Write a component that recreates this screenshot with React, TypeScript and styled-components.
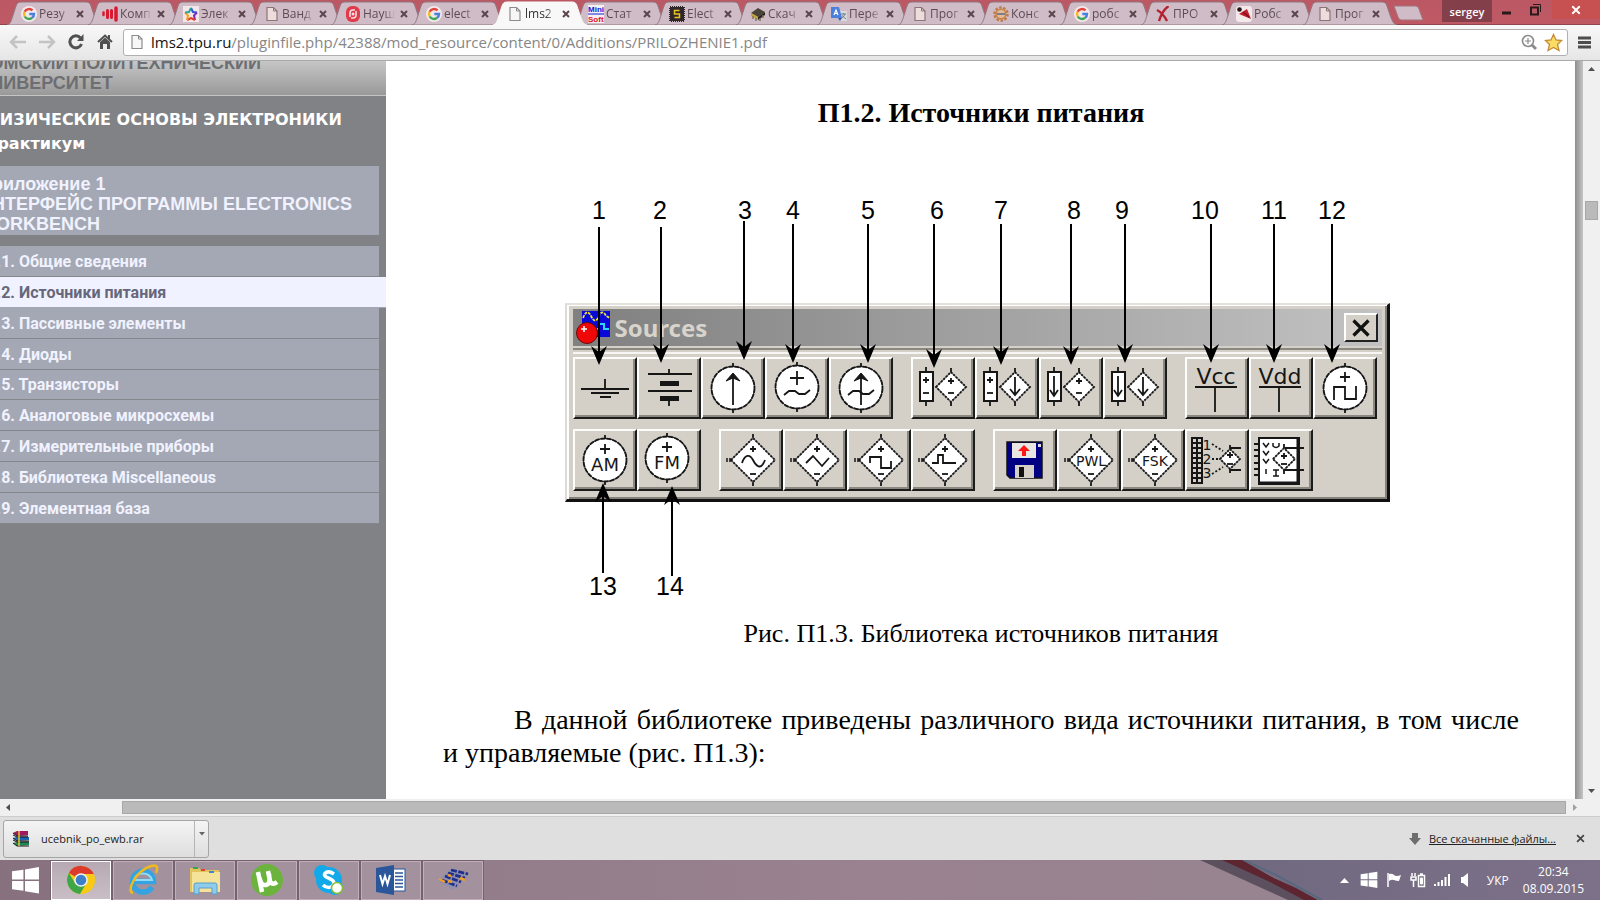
import React from 'react';
import styled, { createGlobalStyle } from 'styled-components';

const ui = '"Open Sans", "Noto Sans", sans-serif';
const arial = '"Liberation Sans", Arial, sans-serif';
const times = '"Liberation Serif", "Times New Roman", serif';

const GlobalStyle = createGlobalStyle`
  * { box-sizing: border-box; }
  body { margin: 0; font-family: ${ui}; overflow: hidden; }
  button { font: inherit; padding: 0; border: 0; background: none; color: inherit; }
  h1, h2, h3, p, ul, figure { margin: 0; padding: 0; }
  svg { display: block; flex: none; }
`;

const Browser = styled.div`
  display: flex;
  flex-direction: column;
  height: 100vh;
  overflow: hidden;
`;

/* ---------- tab strip ---------- */

const TabStrip = styled.header`
  display: flex;
  height: 25px;
  flex: none;
  padding-left: 7px;
  background: linear-gradient(#bb5863, #bf5a65);
  box-shadow: inset 0 -1px #8d4750;
`;

const Tabs = styled.nav`
  display: flex;
  flex: 1;
  min-width: 0;
`;

const TabItem = styled.div<{ $active?: boolean }>`
  position: relative;
  z-index: ${(p) => (p.$active ? 2 : 1)};
  flex: 1;
  min-width: 0;
  height: 25px;
  display: flex;
  align-items: center;
  padding: 2px 0 0 14px;
  color: ${(p) => (p.$active ? '#333' : '#5d4c53')};
`;

const TabShape = styled.svg`
  position: absolute;
  z-index: -1;
  top: 1px;
  left: 0;
  width: calc(100% + 13px);
  height: 24px;
`;

const TabTitle = styled.a`
  flex: 1;
  min-width: 0;
  margin-left: 2px;
  white-space: nowrap;
  font-size: 12px;
  line-height: 18px;
  color: inherit;
  text-decoration: none;
  mask-image: linear-gradient(90deg, #000 65%, transparent);
`;

const TabClose = styled.button`
  width: 8px;
  height: 8px;
  margin: 0 4px 0 5px;
`;

const NewTab = styled.button`
  margin: 5px 18px 0 9px;
  width: 31px;
  height: 16px;
`;

const UserBadge = styled.button`
  width: 50px;
  height: 22px;
  background: #84404a;
  color: #fff;
  font-size: 11px;
  font-weight: 600;
`;

const WindowButtons = styled.div`
  display: flex;
  width: 108px;
  height: 19px;
  justify-content: space-between;
  align-items: center;
`;

const WindowButton = styled.button<{ $close?: boolean }>`
  display: grid;
  place-items: center;
  height: 19px;
  width: ${(p) => (p.$close ? 48 : 28)}px;
  background: ${(p) => (p.$close ? '#c75050' : 'none')};
`;

/* ---------- address bar ---------- */

const Toolbar = styled.div`
  display: flex;
  align-items: center;
  flex: none;
  height: 36px;
  padding: 0 1px 1px 3px;
  background: linear-gradient(#f8f8f8, #e6e6e6);
  border-bottom: 1px solid #a9a9a9;
`;

const NavButton = styled.button`
  display: grid;
  place-items: center;
  width: 29px;
  height: 26px;
  flex: none;
`;

const Omnibox = styled.form`
  display: flex;
  align-items: center;
  flex: 1;
  height: 27px;
  margin: 0 2px 0 4px;
  padding: 0 4px 0 5px;
  gap: 6px;
  background: #fff;
  border: 1px solid #b0b0b0;
  border-radius: 3px;
`;

const AddressField = styled.label`
  position: relative;
  flex: 1;
  display: flex;
  align-items: center;
  height: 25px;
  font-size: 15px;
  line-height: 24px;
  color: #868686;
  white-space: nowrap;
  b { font-weight: 400; color: #111; }
`;

const AddressInput = styled.input`
  position: absolute;
  inset: 0;
  width: 100%;
  border: 0;
  padding: 0;
  background: transparent;
  outline: none;
`;

/* ---------- viewport ---------- */

const Viewport = styled.div`
  display: grid;
  grid-template-columns: 386px minmax(0, 1fr) 8px 17px;
  flex: 1;
  min-height: 0;
`;

const Sidebar = styled.aside`
  overflow: hidden;
  background: #808285;
  font-family: ${arial};
  font-weight: 700;
`;

const University = styled.div`
  height: 35px;
  padding-bottom: 2px;
  display: flex;
  align-items: flex-end;
  overflow: hidden;
  background: linear-gradient(#c6c6c6, #999);
  border-bottom: 1px solid #c4c4c4;
  color: #6d6e71;
  font-size: 18px;
  line-height: 20px;
`;

const Shifted = styled.div`
  margin-left: -21px;
  white-space: nowrap;
`;

const Course = styled.h1`
  margin: 12px 0 0 -16px;
  color: #fff;
  font-family: "DejaVu Sans", ${arial};
  font-size: 16px;
  line-height: 24px;
  font-weight: 700;
  white-space: nowrap;
`;

const Chapter = styled.h2`
  width: 379px;
  height: 69px;
  margin: 10px 0 11px;
  padding-top: 8px;
  background: #a4a8b4;
  color: #f0f2ff;
  font-size: 18px;
  line-height: 20px;
`;

const Sections = styled.ul`
  display: grid;
  grid-auto-rows: 1fr;
  height: 278px;
  list-style: none;
`;

const Section = styled.li<{ $current?: boolean }>`
  display: flex;
  align-items: center;
  width: ${(p) => (p.$current ? '100%' : '379px')};
  padding-top: 2px;
  background: ${(p) => (p.$current ? '#f0f2ff' : '#a4a8b4')};
  border-bottom: 1px solid ${(p) => (p.$current ? '#a4a8b4' : '#85878c')};
`;

const SectionLink = styled.a<{ $current?: boolean }>`
  margin-left: -24px;
  color: ${(p) => (p.$current ? '#66677a' : '#f0f2ff')};
  font-family: Roboto, ${arial};
  font-size: 16px;
  line-height: 20px;
  text-decoration: none;
  white-space: nowrap;
`;

const Document = styled.main`
  overflow: hidden;
  background: #fff;
  padding: 34px 56px 0 57px;
  color: #000;
  font-family: ${times};
  font-size: 28px;
  line-height: 33px;
`;

const Heading = styled.h2`
  font-size: 28px;
  line-height: 36px;
  text-align: center;
`;

const Figure = styled.figure`
  position: relative;
  width: 833px;
  height: 410px;
  margin: 61px auto 0;
  padding-top: 111px;
`;

const Callouts = styled.svg`
  position: absolute;
  inset: 0;
  pointer-events: none;
`;

const Caption = styled.p`
  margin: 15px 0 53px;
  font-size: 26px;
  text-align: center;
`;

const Paragraph = styled.p`
  text-indent: 71px;
  text-align: justify;
`;

const PageEdge = styled.div`
  background: linear-gradient(90deg, #8e8e8e, #c4c4c4);
`;

const VScroll = styled.div`
  display: flex;
  flex-direction: column;
  align-items: center;
  background: #f0f0f0;
`;

const HScroll = styled.div`
  display: flex;
  flex: none;
  align-items: center;
  height: 17px;
  background: #f0f0f0;
`;

const Thumb = styled.div<{ $vertical?: boolean }>`
  ${(p) => (p.$vertical
    ? 'width: 13px; height: 19px; margin: 123px 0 auto;'
    : 'height: 13px; flex: 1; margin: 0 0 0 105px;')}
  background: #bababa;
  border: 1px solid #a8a8a8;
`;

const ScrollArrow = styled.button`
  display: grid;
  place-items: center;
  width: 17px;
  height: 17px;
  flex: none;
`;

const Corner = styled.div`
  width: 17px;
`;

/* ---------- figure: component palette ---------- */

const Palette = styled.div`
  width: 825px;
  height: 199px;
  padding: 4px 5px 0 6px;
  background: #d4d0c8;
  border-style: solid;
  border-width: 2px 3px 3px 2px;
  border-color: #e4e1dc #111 #111 #dedbd6;
  box-shadow: inset 2px 1px #fff, inset -2px -2px #85827c;
`;

const PaletteTitle = styled.div`
  display: flex;
  align-items: center;
  height: 37px;
  padding: 0 4px 0 3px;
  background: linear-gradient(90deg, #808080, #c2c2c2);
  color: #d8d4cc;
  font: 700 24px/30px "Noto Sans", sans-serif;
`;

const PaletteName = styled.span`
  flex: 1;
  margin-left: 4px;
`;

const PaletteClose = styled.button`
  display: grid;
  place-items: center;
  width: 34px;
  height: 29px;
  background: #d4d0c8;
  border: 2px solid;
  border-color: #fff #222 #222 #fff;
`;

const PaletteRule = styled.div`
  height: 6px;
  margin: 2px 0 3px;
  border-top: 2px solid #8b8882;
  border-bottom: 2px solid #f6f5f3;
`;

const PaletteRow = styled.div`
  display: flex;
  gap: 18px;
  margin-bottom: 10px;
`;

const PaletteGroup = styled.div`
  display: flex;
`;

const Tool = styled.button`
  width: 64px;
  height: 62px;
  border-style: solid;
  border-width: 2px;
  border-color: #fdfdfc #1c1c1c #1c1c1c #fdfdfc;
  background: #d4d0c8;
  box-shadow: inset -2px -2px #8b8882;
  svg { margin: -2px; }
`;

/* ---------- downloads and taskbar ---------- */

const Shelf = styled.section`
  display: flex;
  flex: none;
  align-items: center;
  height: 44px;
  padding: 0 15px 0 3px;
  background: #dfdfdf;
  border-top: 1px solid #cdcdcd;
  font-size: 11px;
  color: #222;
`;

const DownloadItem = styled.div`
  display: flex;
  width: 206px;
  height: 38px;
  margin-right: auto;
  border: 1px solid #a5a5a5;
  border-radius: 3px;
  background: linear-gradient(#f4f4f4, #dedede);
`;

const DownloadFile = styled.button`
  display: flex;
  flex: 1;
  align-items: center;
  gap: 11px;
  padding-left: 8px;
`;

const DownloadMenu = styled.button`
  width: 14px;
  display: flex;
  justify-content: center;
  padding-top: 11px;
  border-left: 1px solid #b5b5b5;
`;

const AllDownloads = styled.a`
  margin: 0 20px 0 8px;
  color: #222;
`;

const Taskbar = styled.footer`
  position: relative;
  z-index: 0;
  display: flex;
  flex: none;
  align-items: center;
  height: 40px;
  background: linear-gradient(90deg, #87717f, #937d8b 30%, #9a8290 55%, #988391 75%);
  color: #fff;
  font-size: 12px;
`;

const Wallpaper = styled.svg`
  position: absolute;
  z-index: -1;
  right: 0;
  top: 0;
`;

const StartButton = styled.button`
  display: grid;
  place-items: center;
  width: 50px;
  height: 40px;
`;

const TaskButton = styled.button<{ $active?: boolean }>`
  display: grid;
  place-items: center;
  width: 60px;
  height: 39px;
  margin: 0 1px;
  border: 1px solid ${(p) => (p.$active ? '#fff' : '#c0adb9')};
  outline: 1px solid #75616f;
  outline-offset: 0;
  background: ${(p) => (p.$active ? 'linear-gradient(#b6a9b3, #c9bec6)' : '#a3929e')};
`;

const Tray = styled.div`
  display: flex;
  align-items: center;
  margin-left: auto;
  padding-right: 16px;
  gap: 8px;
`;

const TrayMore = styled.button`
  margin-right: 3px;
`;

const Language = styled.button`
  margin: 0 6px 0 5px;
`;

const Clock = styled.time`
  text-align: center;
  line-height: 17px;
`;

/* ---------- small drawings ---------- */

const Cross = ({ size = 8, color = '#5a464c', w = 2 }: { size?: number; color?: string; w?: number }) => (
  <svg width={size} height={size} viewBox="0 0 8 8">
    <path d="M1 1L7 7M7 1L1 7" stroke={color} strokeWidth={w} />
  </svg>
);

const Tri = ({ dir, color = '#505050' }: { dir: 'up' | 'down' | 'left' | 'right'; color?: string }) => {
  const d = { up: 'M1 6L4.500 2 8 6Z', down: 'M1 3L4.500 7 8 3Z', left: 'M6 1L2 4.500 6 8Z', right: 'M3 1L7 4.500 3 8Z' }[dir];
  return <svg width="9" height="9"><path d={d} fill={color} /></svg>;
};

const PageIcon = ({ fill = '#f7f7f7', stroke = '#8c8c8c' }: { fill?: string; stroke?: string }) => (
  <svg width="16" height="16" viewBox="0 0 16 16">
    <path d="M3 1.500H9.500L13 5V14.500H3Z" fill={fill} stroke={stroke} strokeWidth="1.200" />
    <path d="M9.500 1.500V5H13" fill="none" stroke={stroke} />
  </svg>
);

const GoogleG = () => (
  <svg width="16" height="16" viewBox="0 0 16 16">
    <circle cx="8" cy="8" r="8" fill="#f3e9ec" />
    <g fill="none" strokeWidth="2.400">
      <path d="M11.500 4.400A5 5 0 0 0 3.600 5.700" stroke="#e2443a" />
      <path d="M3.600 5.700A5 5 0 0 0 3.700 10.500" stroke="#f2b921" />
      <path d="M3.700 10.500A5 5 0 0 0 11.300 11.700" stroke="#3da556" />
      <path d="M11.300 11.700A5 5 0 0 0 13 8H8.300" stroke="#4a7fe0" />
    </g>
  </svg>
);

const favicons: Record<string, React.ReactNode> = {
  google: <GoogleG />,
  page: <PageIcon fill="#ecdcdc" stroke="#8d7378" />,
  whitePage: <PageIcon />,
  bars: (
    <svg width="16" height="16" stroke="#d8192f" strokeLinecap="round">
      <path d="M1.500 6.500V9" strokeWidth="2.500" /><path d="M5.500 4.500V11.500M9.500 4.500V11.500" strokeWidth="3" /><path d="M14 2V14" strokeWidth="3.500" />
    </svg>
  ),
  star: (
    <svg width="16" height="16">
      <rect width="16" height="16" fill="#f3e6e8" />
      <path d="M8 2L10 6 14 6.500" fill="none" stroke="#2f55d4" strokeWidth="2" />
      <path d="M14 6.500L11 9.500 12 14" fill="none" stroke="#7b2bb8" strokeWidth="2" />
      <path d="M12 14L8 12 4 14" fill="none" stroke="#e03b2a" strokeWidth="2" />
      <path d="M4 14L5 9.500 2 6.500" fill="none" stroke="#f0a51e" strokeWidth="2" />
      <path d="M2 6.500L6 6 8 2" fill="none" stroke="#29a3a3" strokeWidth="2" />
    </svg>
  ),
  red: (
    <svg width="16" height="16">
      <rect x="1" y="0" width="14" height="16" rx="6" fill="#e23a49" />
      <path d="M5 11V7A3 3 0 0 1 8 4H10M11 5V9A3 3 0 0 1 8 12H6" fill="none" stroke="#f3dfe3" strokeWidth="1.600" />
      <circle cx="8" cy="8" r="1.500" fill="#f3dfe3" />
    </svg>
  ),
  minisoft: (
    <svg width="16" height="18" fontFamily="Liberation Sans" fontWeight="700" fontSize="8">
      <rect width="16" height="18" fill="#f6f0f2" />
      <text x="0" y="7" fill="#1220d8">Mini</text>
      <path d="M0 9H16" stroke="#1220d8" />
      <text x="0" y="17" fill="#e01722">Soft</text>
    </svg>
  ),
  chipS: (
    <svg width="16" height="16">
      <rect x="1" y="1" width="14" height="14" fill="#30262a" stroke="#30262a" strokeWidth="2" strokeDasharray="1 1" />
      <path d="M10.500 4.500H5.500V8H10.500V11.500H5.500" fill="none" stroke="#e6c51f" strokeWidth="1.500" />
    </svg>
  ),
  chip: (
    <svg width="16" height="16">
      <path d="M1 7L8 2 15 6 8 11Z" fill="#4a4438" /><path d="M1 7L8 11V14L1 10Z" fill="#c5a43c" />
      <path d="M8 11L15 6V9L8 14Z" fill="#29231d" />
      <path d="M3 10V13M6 12V15M10 12V15M13 9V12" stroke="#80755f" strokeWidth="1.500" />
    </svg>
  ),
  translate: (
    <svg width="16" height="16">
      <path d="M7 5H16V15H9Z" fill="#d9d9de" /><path d="M0 1H8L11 12H0Z" fill="#4a80db" />
      <path d="M7 12H11L9 15Z" fill="#315fb5" />
      <path d="M3 9L5 4 7 9M3.500 7.500H6.500" fill="none" stroke="#fff" strokeWidth="1.200" />
      <path d="M10 8H15M12.500 7V8M14 8Q13 11 10 12.500M11 9.500L15 13" fill="none" stroke="#777b88" />
    </svg>
  ),
  gear: (
    <svg width="16" height="16">
      <circle cx="8" cy="8" r="6.500" fill="none" stroke="#bd7b45" strokeWidth="2.500" strokeDasharray="2.500 1.500" />
      <circle cx="8" cy="8" r="4.800" fill="#e2bb98" stroke="#c98349" strokeWidth="1.500" />
      <path d="M4 8H12" stroke="#7c7c8d" strokeWidth="2" />
    </svg>
  ),
  redX: (
    <svg width="16" height="16">
      <path d="M13.500 0Q7 5 4 15M2 4Q8 7 12 15" fill="none" stroke="#b3222e" strokeWidth="2.400" />
    </svg>
  ),
  robot: (
    <svg width="16" height="16">
      <rect width="16" height="16" rx="3" fill="#f3e9ea" />
      <path d="M3 8L11 3 15 13Z" fill="#c41e2c" /><path d="M7 6L13 11" stroke="#7c1119" strokeWidth="1.500" />
      <circle cx="3.500" cy="3.500" r="2.300" fill="#241517" />
    </svg>
  ),
};

const tabs: [string, string][] = [
  ['google', 'Резу'], ['bars', 'Комп'], ['star', 'Элек'], ['page', 'Ванд'], ['red', 'Науш'],
  ['google', 'elect'], ['whitePage', 'lms2'], ['minisoft', 'Стат'], ['chipS', 'Elect'], ['chip', 'Скач'],
  ['translate', 'Пере'], ['page', 'Прог'], ['gear', 'Конс'], ['google', 'робс'], ['redX', 'ПРО'],
  ['robot', 'Робс'], ['page', 'Прог'],
];

const Tab = ({ icon, title, active }: { icon: string; title: string; active?: boolean }) => (
  <TabItem $active={active}>
    <TabShape viewBox="0 0 94 24" preserveAspectRatio="none">
      <path
        d="M0 24C4 23 4 20 9 5C10 2 11 1 14 1H79C82 1 83 2 84 5C89 20 90 23 94 24Z"
        fill={active ? '#f8f8f8' : '#cfbcc6'}
        stroke={active ? '#f8f8f8' : '#8f767f'}
      />
    </TabShape>
    {favicons[icon]}
    <TabTitle href="#">{title}</TabTitle>
    <TabClose aria-label="Закрыть вкладку"><Cross /></TabClose>
  </TabItem>
);

/* ---------- schematic symbols, each on a 64 x 62 button ---------- */

const ink = '#161616';
const Sign = ({ x, y, s = 3, minus }: { x: number; y: number; s?: number; minus?: boolean }) => (
  <path d={`M${x - s} ${y}H${x + s}${minus ? '' : `M${x} ${y - s}V${y + s}`}`} />
);
const Round = ({ x = 32, y = 31 }: { x?: number; y?: number }) => (
  <>
    <path d={`M${x} ${y - 25}V${y + 25}`} />
    <circle cx={x} cy={y} r="21.500" fill="#fff" strokeDasharray="5 1" />
    <circle cx={x} cy={y} r="21.500" strokeWidth="1" />
  </>
);
const Diamond = ({ x = 34, y = 31, r = 22 }: { x?: number; y?: number; r?: number }) => (
  <>
    <path d={`M${x} ${y - r - 4}V${y + r + 4}`} />
    <path d={`M${x - r} ${y}L${x} ${y - r}L${x + r} ${y}L${x} ${y + r}Z`} fill="#fff" stroke="#666" strokeWidth="1.200" />
    <path d={`M${x - r} ${y}L${x} ${y - r}L${x + r} ${y}L${x} ${y + r}Z`} strokeDasharray="2 1.500" />
  </>
);
const Controlled = ({ children }: { children: React.ReactNode }) => (
  <>
    <Diamond />
    <path d="M8 29V33M11 29V33" strokeWidth="1.500" />
    <Sign x={34} y={20} />
    <Sign x={34} y={45} minus />
    {children}
  </>
);
const Pair = ({ current, out }: { current?: boolean; out?: boolean }) => (
  <>
    <path d="M15 10V49" />
    <rect x="9" y="15" width="13" height="29" fill="#fff" strokeWidth="2" />
    <Diamond x={40} y={30} r={15} />
    {current ? <path d="M15 19V39M11 33L15 39 19 33" /> : <><Sign x={15} y={23} /><Sign x={15} y={36} minus /></>}
    {out ? <path d="M40 20V38M35 32L40 38 45 32" /> : <><Sign x={40} y={24} /><Sign x={40} y={36} minus /></>}
  </>
);
const Label = ({ x, y, size, children }: { x: number; y: number; size: number; children: string }) => (
  <text x={x} y={y} fontSize={size} fontFamily="DejaVu Sans" textAnchor="middle" fill={ink}>{children}</text>
);

const wave = 'M19 38L24 34H30L34 37 40 37 45 33';

const symbols: Record<string, React.ReactNode> = {
  ground: <path d="M32 22V32M8 32H56M18 36H46M27 40H38" />,
  battery: <><path d="M32 12V17M11 17H55M11 34H55M32 43V49" /><path d="M23 26.500H42M23 41.500H42" strokeWidth="5" /></>,
  current: <><Round /><path d="M32 18V48" /><path d="M32 16L25 24 32 21 39 24Z" fill={ink} strokeWidth="1" /></>,
  ac: <><Round y={30} /><Sign x={32} y={21} s={7} /><path d={wave} /></>,
  acCurrent: <><Round /><path d="M32 18V48" /><path d="M32 16L25 24 32 21 39 24Z" fill={ink} strokeWidth="1" /><path d={wave} /></>,
  vcvs: <Pair />,
  vccs: <Pair out />,
  ccvs: <Pair current />,
  cccs: <Pair current out />,
  vcc: <><Label x={31} y={27} size={22}>Vcc</Label><path d="M10 30H52M30 30V55" /></>,
  vdd: <><Label x={31} y={27} size={22}>Vdd</Label><path d="M10 30H52M30 30V55" /></>,
  clock: <><Round /><Sign x={32} y={20} s={5} /><path d="M21 43V30H32V42H43V29" /></>,
  am: <><Round /><Sign x={32} y={20} s={5} /><Label x={32} y={42} size={18}>AM</Label></>,
  fm: <><Round x={30} y={29} /><Sign x={30} y={18} s={5} /><Label x={30} y={40} size={18}>FM</Label></>,
  sine: <Controlled><path d="M23 34C26 25 31 25 34 31S42 42 46 31" /></Controlled>,
  triangle: <Controlled><path d="M23 34L30 27 39 37 46 29" /></Controlled>,
  square: <Controlled><path d="M23 34V28H34V39H44V32" /></Controlled>,
  pulse: <Controlled><path d="M21 34H27V26H32V34H45" /></Controlled>,
  floppy: (
    <g stroke="none">
      <path d="M14 13H49V49H17L14 46Z" fill="#000083" stroke="#111" strokeWidth="1.500" />
      <path d="M19 14H43V29H19Z" fill="#e8e6e2" /><path d="M31 16L37 22H33V27H29V22H25Z" fill="#ff1717" />
      <path d="M22 36H41V49H22Z" fill="#d4d0c8" /><path d="M26 38H31V48H26Z" fill="#111" />
      <path d="M45 15H48V18H45Z" fill="#ddd" />
    </g>
  ),
  pwl: <Controlled><Label x={34} y={37} size={14}>PWL</Label></Controlled>,
  fsk: <Controlled><Label x={34} y={37} size={14}>FSK</Label></Controlled>,
  poly: (
    <>
      <path d="M7 9H17V54H7ZM12 9V54M7 14H17M7 19H17M7 24H17M7 29H17M7 34H17M7 39H17M7 44H17M7 49H17" strokeWidth="2" />
      <Label x={22} y={21} size={14}>1</Label><Label x={22} y={35} size={14}>2</Label><Label x={22} y={49} size={14}>3</Label>
      <Diamond x={45} y={30} r={10} />
      <path d="M27 15L38 22M27 30H34M27 45L38 38" strokeDasharray="2 2" />
      <Sign x={45} y={26} /><Sign x={45} y={35} minus /><path d="M45 19H56M45 41H56" />
    </>
  ),
  nonlinear: (
    <>
      <path d="M10 9H50V55H10Z" fill="#fff" strokeWidth="2" /><path d="M49 10V54H11" strokeWidth="3" />
      <path d="M5 15H10M5 21H10M5 27H10M5 34H10M5 40H10M5 46H10" />
      <Diamond x={35} y={30} r={11} />
      <Sign x={35} y={27} /><Sign x={35} y={35} minus /><path d="M36 19H55M36 41H55" />
      <path d="M14 14L17 18 20 14M14 22L17 26 20 22M14 30L17 34 20 30M17 40V45M24 14V17Q27 20 30 17V14M24 41H30M27 41V47M24 47H30" strokeWidth="1.500" />
    </>
  ),
};

for (const key of Object.keys(symbols)) {
  symbols[key] = <g>{symbols[key]}</g>;
}

const SymbolArt = styled.svg`
  fill: none;
  stroke: ${ink};
  text { stroke: none; }
`;

const rows = [
  [['ground', 'battery', 'current', 'ac', 'acCurrent'], ['vcvs', 'vccs', 'ccvs', 'cccs'], ['vcc', 'vdd', 'clock']],
  [['am', 'fm'], ['sine', 'triangle', 'square', 'pulse'], ['floppy', 'pwl', 'fsk', 'poly', 'nonlinear']],
];

/* number, arrow x, label x, line start, arrow tip */
const callouts = [
  [1, 599, 599, 227, 365], [2, 661, 660, 227, 363], [3, 744, 745, 221, 360], [4, 793, 793, 224, 363],
  [5, 868, 868, 224, 363], [6, 934, 937, 224, 368], [7, 1001, 1001, 224, 365], [8, 1071, 1074, 224, 365],
  [9, 1125, 1122, 224, 363], [10, 1211, 1205, 224, 363], [11, 1274, 1274, 224, 363], [12, 1332, 1332, 224, 363],
  [13, 603, 603, 573, 483], [14, 672, 670, 576, 486],
];

const sections = [
  'Общие сведения', 'Источники питания', 'Пассивные элементы', 'Диоды', 'Транзисторы',
  'Аналоговые микросхемы', 'Измерительные приборы', 'Библиотека Miscellaneous', 'Элементная база',
];

const SourcesFigure = () => (
  <Figure>
    <Palette>
      <PaletteTitle>
        <svg width="35" height="35">
          <rect x="6" y="1" width="28" height="26" fill="#0808d8" />
          <path d="M7 8Q11 -2 15 6T22 8Q26 -2 30 6L34 8" fill="none" stroke="#e8e23a" strokeWidth="1.800" strokeDasharray="3 1" />
          <path d="M18 19H23V14H28V19H33" fill="none" stroke="#2bd9ff" strokeWidth="2" />
          <circle cx="11" cy="23" r="10.500" fill="#f00808" stroke="#6b0909" />
          <path d="M5 19H11M8 16V22" stroke="#fff" strokeWidth="1.500" />
        </svg>
        <PaletteName>Sources</PaletteName>
        <PaletteClose aria-label="Закрыть"><Cross size={20} color="#111" w={1.3} /></PaletteClose>
      </PaletteTitle>
      <PaletteRule />
      {rows.map((groups, r) => (
        <PaletteRow key={r}>
          {groups.map((names) => (
            <PaletteGroup key={names[0]}>
              {names.map((name) => (
                <Tool key={name} aria-label={name}>
                  <SymbolArt width="64" height="62" strokeWidth="1.800">{symbols[name]}</SymbolArt>
                </Tool>
              ))}
            </PaletteGroup>
          ))}
        </PaletteRow>
      ))}
    </Palette>
    <Callouts width="833" height="410" viewBox="565 192 833 410">
      {callouts.map(([n, x, lx, from, tip]) => {
        const s = tip > from ? -1 : 1;
        return (
          <g key={n}>
            <path d={`M${x} ${from}V${tip + s * 8}`} stroke="#000" strokeWidth="2" />
            <path d={`M${x} ${tip}L${x - 8} ${tip + s * 19}L${x} ${tip + s * 13}L${x + 8} ${tip + s * 19}Z`} />
            <text x={lx} y={s < 0 ? 219 : 595} fontSize="25" fontFamily="Liberation Sans" textAnchor="middle">{n}</text>
          </g>
        );
      })}
    </Callouts>
  </Figure>
);

/* ---------- taskbar icons ---------- */

const WinLogo = ({ size }: { size: number }) => (
  <svg width={size} height={size} viewBox="0 0 28 28" fill="#fff">
    <path d="M1 5L12 3.500V13H1ZM13.500 3.300L27 1V13H13.500ZM1 14.500H12V24L1 22.500ZM13.500 14.500H27V26.500L13.500 24.300Z" />
  </svg>
);

const apps: [string, React.ReactNode][] = [
  ['Chrome', (
    <svg width="30" height="30" viewBox="0 0 30 30">
      <circle cx="15" cy="15" r="14" fill="#f8ca12" />
      <path d="M15 15L2.900 8A14 14 0 0 1 27.800 9H15Z" fill="#dc3a2c" />
      <path d="M2.900 8A14 14 0 0 0 14 29L20.500 18 15 15 9 18Z" fill="#3fa648" />
      <circle cx="15" cy="15" r="6.800" fill="#f3f3f3" /><circle cx="15" cy="15" r="5.300" fill="#3d7fc9" />
    </svg>
  )],
  ['Internet Explorer', (
    <svg width="32" height="32" viewBox="0 0 32 32" fill="none">
      <path d="M7 17.500H26.500A10.500 10.500 0 1 0 25 23" stroke="#35a3e2" strokeWidth="5.500" />
      <path d="M8 16H25A9.500 9.500 0 0 0 7 16" stroke="#8fdcf8" strokeWidth="2" />
      <path d="M6 29C-1 28 8 7 24 2C31 0 31 4 29 9" stroke="#f0b91c" strokeWidth="2.500" />
    </svg>
  )],
  ['Проводник', (
    <svg width="32" height="32" viewBox="0 0 32 32">
      <path d="M1 4H10L12 6H30V28H1Z" fill="#e3c35b" /><path d="M3 8H31V28H3Z" fill="#f6e39a" />
      <path d="M4 3H9V5H4ZM12 5H16V7H12ZM20 7H25V9H20Z" fill="#35a854" /><path d="M12 5H16V7H12Z" fill="#d6492f" /><path d="M21 7H25V9H21Z" fill="#3b86d0" />
      <path d="M5 30V21Q5 19 7 19H26Q28 19 28 21V30H23V24H10V30Z" fill="#8ecbed" stroke="#5b9fc8" />
    </svg>
  )],
  ['uTorrent', (
    <svg width="34" height="34" viewBox="0 0 34 34">
      <circle cx="17" cy="17" r="16" fill="#6cb33e" />
      <path d="M8 9L12 29M9.500 15Q11 23 16 22T19 11M18 8L20 18Q22 23 27 19" fill="none" stroke="#fff" strokeWidth="4.500" />
    </svg>
  )],
  ['Skype', (
    <svg width="32" height="32" viewBox="0 0 32 32">
      <circle cx="9" cy="9" r="8" fill="#12a9ea" /><circle cx="22" cy="23" r="8" fill="#12a9ea" /><circle cx="16" cy="16" r="13" fill="#12a9ea" />
      <path d="M21 10Q15 6 12 9.500C9 14 21 14 21 19C20 25 13 24 10 21" fill="none" stroke="#fff" strokeWidth="3.500" />
      <circle cx="24" cy="24" r="5.500" fill="#fff" stroke="#84bd3b" strokeWidth="1.500" />
    </svg>
  )],
  ['Word', (
    <svg width="32" height="32" viewBox="0 0 32 32">
      <rect x="16" y="5" width="14" height="22" fill="#fff" stroke="#2b579a" />
      <path d="M20 9H28M20 12.500H28M20 16H28M20 19.500H28M20 23H28" stroke="#2b579a" strokeWidth="1.500" />
      <path d="M1 4L19 1V31L1 28Z" fill="#2b579a" />
      <path d="M5 11L7.500 20 10 12 12.500 20 15 11" fill="none" stroke="#fff" strokeWidth="2" />
    </svg>
  )],
  ['Electronics Workbench', (
    <svg width="34" height="28" viewBox="0 0 34 28">
      <path d="M14 3L33 8L17 24L2 15Z" fill="#8f8fae" />
      <path d="M15 4L32 8M12 7L29 12M9 10L25 16M6 14L21 20" stroke="#20308a" strokeWidth="2.800" strokeDasharray="6 1.500" />
      <path d="M3 13L9 16M24 12L29 14M12 15L16 16M12 9L15 10" stroke="#ef9c28" strokeWidth="2.500" />
    </svg>
  )],
];

export default function App() {
  return (
    <Browser>
      <GlobalStyle />
      <TabStrip>
        <Tabs>
          {tabs.map(([icon, title], i) => <Tab key={i} icon={icon} title={title} active={i === 6} />)}
        </Tabs>
        <NewTab aria-label="Новая вкладка">
          <svg width="31" height="16"><path d="M1 1H23Q25 1 26 4L30 15H8Q6 15 5 12Z" fill="#cfbcc6" stroke="#a3747d" /></svg>
        </NewTab>
        <UserBadge>sergey</UserBadge>
        <WindowButtons>
          <WindowButton aria-label="Свернуть"><svg width="9" height="14"><path d="M0 10H9" stroke="#2a1a1c" strokeWidth="3" /></svg></WindowButton>
          <WindowButton aria-label="Развернуть">
            <svg width="12" height="12" fill="none" stroke="#2a1a1c"><path d="M1 3.500H8V10.500H1Z" strokeWidth="2" /><path d="M3 .500H10.500V8" /></svg>
          </WindowButton>
          <WindowButton $close aria-label="Закрыть"><Cross size={10} color="#fff" w={1.5} /></WindowButton>
        </WindowButtons>
      </TabStrip>

      <Toolbar>
        <NavButton aria-label="Назад">
          <svg width="18" height="16"><path d="M17 8H3M8 2L2 8 8 14" fill="none" stroke="#c3c3c3" strokeWidth="2.500" /></svg>
        </NavButton>
        <NavButton aria-label="Вперёд">
          <svg width="18" height="16"><path d="M1 8H15M10 2L16 8 10 14" fill="none" stroke="#c3c3c3" strokeWidth="2.500" /></svg>
        </NavButton>
        <NavButton aria-label="Обновить">
          <svg width="16" height="16"><path d="M12.500 4A6 6 0 1 0 13.500 10" fill="none" stroke="#505050" strokeWidth="3" /><path d="M9 7H15.500V0Z" fill="#505050" /></svg>
        </NavButton>
        <NavButton aria-label="Домашняя страница">
          <svg width="16" height="16"><path d="M1 8L8 1.500 15 8" fill="none" stroke="#505050" strokeWidth="2" /><path d="M3 8L8 3.500 13 8V15H10V10H6V15H3Z" fill="#505050" /><path d="M11 1H13V5H11Z" fill="#505050" /></svg>
        </NavButton>
        <Omnibox>
          <PageIcon />
          <AddressField>
            <span><b>lms2.tpu.ru</b>/pluginfile.php/42388/mod_resource/content/0/Additions/PRILOZHENIE1.pdf</span>
            <AddressInput aria-label="Адрес страницы" />
          </AddressField>
          <svg width="17" height="17" fill="none" stroke="#8b8b8b"><circle cx="7" cy="7" r="5.500" strokeWidth="1.600" /><path d="M7 4V10M4 7H10" strokeWidth="1.200" /><path d="M11 11L15 15" strokeWidth="2.800" /></svg>
          <svg width="19" height="19"><path d="M9.500 1.500L12 7 17.500 7.500 13.500 11.500 15 17.500 9.500 14.500 4 17.500 5.500 11.500 1.500 7.500 7 7Z" fill="#fbdd66" stroke="#c58a33" strokeWidth="1.300" /></svg>
        </Omnibox>
        <NavButton aria-label="Меню">
          <svg width="13" height="13"><path d="M0 2H13M0 6.500H13M0 11H13" stroke="#4d4d4d" strokeWidth="3" /></svg>
        </NavButton>
      </Toolbar>

      <Viewport>
        <Sidebar>
          <University><Shifted>ТОМСКИЙ ПОЛИТЕХНИЧЕСКИЙ<br />УНИВЕРСИТЕТ</Shifted></University>
          <Course>ФИЗИЧЕСКИЕ ОСНОВЫ ЭЛЕКТРОНИКИ<br />Практикум</Course>
          <Chapter><Shifted>Приложение 1<br />ИНТЕРФЕЙС ПРОГРАММЫ ELECTRONICS<br />WORKBENCH</Shifted></Chapter>
          <Sections>
            {sections.map((s, i) => (
              <Section key={s} $current={i === 1}>
                <SectionLink href="#" $current={i === 1}>П1.{i + 1}. {s}</SectionLink>
              </Section>
            ))}
          </Sections>
        </Sidebar>
        <Document>
          <Heading>П1.2. Источники питания</Heading>
          <SourcesFigure />
          <Caption>Рис. П1.3. Библиотека источников питания</Caption>
          <Paragraph>
            В данной библиотеке приведены различного вида источники питания, в том числе и&nbsp;управляемые (рис. П1.3):
          </Paragraph>
        </Document>
        <PageEdge />
        <VScroll>
          <ScrollArrow aria-label="Вверх"><Tri dir="up" /></ScrollArrow>
          <Thumb $vertical />
          <ScrollArrow aria-label="Вниз"><Tri dir="down" /></ScrollArrow>
        </VScroll>
      </Viewport>
      <HScroll>
        <ScrollArrow aria-label="Влево"><Tri dir="left" /></ScrollArrow>
        <Thumb />
        <ScrollArrow aria-label="Вправо"><Tri dir="right" color="#a0a0a0" /></ScrollArrow>
        <Corner />
      </HScroll>

      <Shelf>
        <DownloadItem>
          <DownloadFile>
            <svg width="18" height="18">
              <path d="M1 3L5 1H16V5L5 6Z" fill="#a3195f" /><path d="M1 8L5 7H17V10L5 11Z" fill="#1c62b5" /><path d="M1 13L5 12H17V15L5 16Z" fill="#1d8a55" />
              <path d="M1 3L5 6H16M1 5L5 7H16M1 8L5 11H17M1 10L5 12H17M1 13L5 16H17" fill="none" stroke="#171717" />
              <path d="M7 1V16" stroke="#e7c332" strokeWidth="1.500" />
            </svg>
            ucebnik_po_ewb.rar
          </DownloadFile>
          <DownloadMenu aria-label="Действия с файлом"><svg width="6" height="4"><path d="M0 0H6L3 3.500Z" fill="#666" /></svg></DownloadMenu>
        </DownloadItem>
        <svg width="12" height="12"><path d="M3 0H9V5H12L6 12 0 5H3Z" fill="#6d6d6d" /></svg>
        <AllDownloads href="#">Все скачанные файлы...</AllDownloads>
        <button aria-label="Закрыть панель загрузок"><Cross size={9} color="#444" w={1.5} /></button>
      </Shelf>

      <Taskbar>
        <Wallpaper width="440" height="40">
          <defs>
            <linearGradient id="dusk" x1="0" x2="1"><stop offset="0" stopColor="#70697f" /><stop offset="1" stopColor="#7d7189" /></linearGradient>
          </defs>
          <path d="M80 0H440V40H158Z" fill="url(#dusk)" />
          <path d="M40 0H66L120 24 148 40H128Z" fill="#5c505f" />
          <path d="M62 0H82L114 18 136 28 158 40H144L110 22Z" fill="#5c2530" />
          <path d="M84 0L118 16L162 40" fill="none" stroke="#52687f" strokeWidth="1.500" />
        </Wallpaper>
        <StartButton aria-label="Пуск"><WinLogo size={29} /></StartButton>
        {apps.map(([name, icon], i) => <TaskButton key={name} $active={i === 0} aria-label={name}>{icon}</TaskButton>)}
        <Tray>
          <TrayMore aria-label="Скрытые значки"><svg width="9" height="9"><path d="M0 7L4.500 2 9 7Z" fill="#fff" /></svg></TrayMore>
          <WinLogo size={18} />
          <svg width="16" height="16"><path d="M2 1V15" stroke="#fff" strokeWidth="1.500" /><path d="M3 2Q6 1 8 3T15 3L13 9Q10 9 8 8T3 9Z" fill="#fff" /></svg>
          <svg width="16" height="16" fill="none" stroke="#fff"><path d="M8.500 3.500H14.500V14.500H8.500ZM10 2H13" strokeWidth="1.500" /><path d="M2 1V4M5 1V4M1 5H6V8H1ZM3.500 8V15" strokeWidth="1.500" /><path d="M10.500 6H12.500V12H10.500Z" fill="#fff" /></svg>
          <svg width="16" height="14" stroke="#fff" strokeWidth="2"><path d="M1 13V11M4.500 13V9M8 13V7M11.500 13V4M15 13V1" /></svg>
          <svg width="16" height="16"><path d="M3 5H5L10 1V15L5 11H3Z" fill="#fff" /></svg>
          <Language>УКР</Language>
          <Clock>20:34<br />08.09.2015</Clock>
        </Tray>
      </Taskbar>
    </Browser>
  );
}
